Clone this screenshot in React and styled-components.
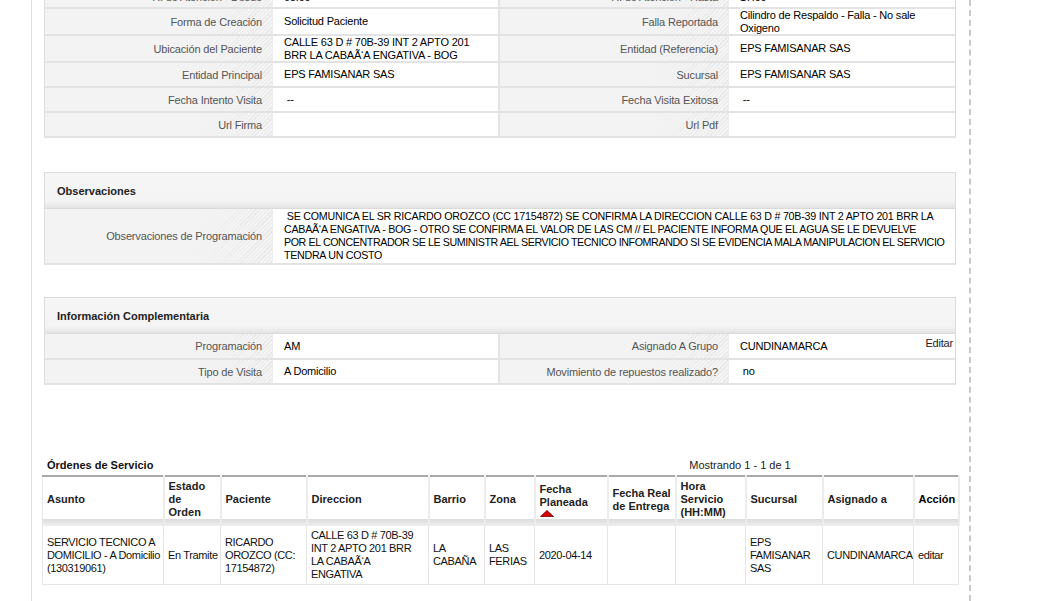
import styled, { createGlobalStyle } from 'styled-components';

const GlobalStyle = createGlobalStyle`
  html, body {
    margin: 0;
    padding: 0;
    background: #fff;
  }
  body {
    font-family: "Liberation Sans", Arial, sans-serif;
    font-size: 11px;
    color: #000;
  }
`

const Page = styled.div`
    height: 601px;
    overflow: hidden;
    padding-left: 31px;
`

const Frame = styled.div`
    width: 940px;
    height: 601px;
    box-sizing: border-box;
    overflow: hidden;
    border-left: 1px solid #dcdcdc;
    border-right: 2px dashed #c9c9c9;
    padding: 0 13px 0 12px;
`

// page is scrolled a bit, first row is cut at the top
const Scrolled = styled.div`
    margin-top: -16px;
`

const FieldGrid = styled.div`
    display: grid;
    grid-template-columns: ${props => props.cols};
    border-left: ${props => props.boxed ? '1px solid #dcdcdc' : 'none'};
    border-right: ${props => props.boxed ? '1px solid #dcdcdc' : 'none'};
`

const Label = styled.div`
    display: flex;
    align-items: ${props => props.low ? 'flex-end' : 'center'};
    justify-content: flex-end;
    text-align: right;
    min-height: ${props => props.h || '23px'};
    padding: 0 10px ${props => props.low ? '4px' : '0'};
    color: #555;
    letter-spacing: -0.15px;
    border-bottom: 2px solid #e3e3e3;
    background:
        linear-gradient(to right, #f3f3f3 62%, rgba(243, 243, 243, 0.2) 100%),
        repeating-linear-gradient(135deg, #f4f4f4 0 2px, #e5e5e5 2px 3px);
`

const Value = styled.div`
    position: relative;
    display: flex;
    align-items: ${props => props.low ? 'flex-end' : 'center'};
    min-width: 0;
    padding: 0 11px ${props => props.low ? '4px' : '0'};
    line-height: 12.5px;
    letter-spacing: -0.2px;
    border-bottom: 2px solid #e3e3e3;
    border-left: 1px solid #ececec;
    border-right: ${props => props.divider ? '2px solid #e3e3e3' : 'none'};
`

const ObsText = styled.div`
    padding: 1px 0;
    line-height: 13px;
    font-size: 10.7px;
    white-space: nowrap;
`

const ObsLine = styled.div`
    letter-spacing: ${props => props.spacing};
`

const EditLink = styled.span`
    position: absolute;
    top: 3px;
    right: 2px;
    font-size: 11px;
    color: #222;
`

const Section = styled.section`
    margin-top: ${props => props.gap};
    border: 1px solid #dcdcdc;
    border-bottom: none;
`

const SectionHeader = styled.div`
    height: 35px;
    display: flex;
    align-items: center;
    padding-left: 12px;
    font-weight: bold;
    color: #222;
    background: linear-gradient(to bottom, #f6f6f6 0%, #f4f4f4 80%, #e4e4e4 100%);
    border-bottom: 1px solid #dadada;
`

const OrdersHead = styled.div`
    margin-top: 72px;
    display: grid;
    grid-template-columns: 456px 456px;
    height: 15px;
    align-items: center;
`

const OrdersTitle = styled.div`
    padding-left: 3px;
    font-weight: bold;
    color: #111;
`

const Counter = styled.div`
    text-align: center;
    padding-left: 24px;
    color: #222;
`

const OrdersTable = styled.table`
    margin: 3px -2px 0;
    width: 916px;
    border-collapse: collapse;
    table-layout: fixed;
    border-top: 2px solid #a9a9a9;
    border-left: 1px solid #e6e6e6;
`

const Th = styled.th`
    text-align: left;
    vertical-align: middle;
    padding: 3px 3px 7px 4px;
    line-height: 13px;
    font-weight: bold;
    white-space: nowrap;
    color: ${props => props.dark ? '#000' : '#222'};
    border-right: 2px solid #ececec;
    background: linear-gradient(to bottom, #fff 0%, #fff 85%, #dcdcdc 86%, #efefef 100%);
`

const Td = styled.td`
    vertical-align: middle;
    padding: 3px 3px 3px 4px;
    line-height: 13px;
    letter-spacing: -0.35px;
    white-space: nowrap;
    color: #111;
    border-right: 1px solid #e6e6e6;
    border-bottom: 1px solid #e6e6e6;
`

const SortUp = () => (
    <svg width="14" height="7" viewBox="0 0 14 7" style={{ display: 'block', marginTop: 1 }}>
        <polygon points="7,0.5 13.5,6.5 0.5,6.5" fill="#d40000" stroke="#7a0000" strokeWidth="0.8" />
    </svg>
)

const topRows = [
    ['Forma de Creación', 'Solicitud Paciente', 'Falla Reportada', <>Cilindro de Respaldo - Falla - No sale<br />Oxigeno</>],
    ['Ubicación del Paciente', <>CALLE 63 D # 70B-39 INT 2 APTO 201<br />BRR LA CABAÃ‘A ENGATIVA - BOG</>, 'Entidad (Referencia)', 'EPS FAMISANAR SAS'],
    ['Entidad Principal', 'EPS FAMISANAR SAS', 'Sucursal', 'EPS FAMISANAR SAS'],
    ['Fecha Intento Visita', '\u00a0--', 'Fecha Visita Exitosa', '\u00a0--'],
    ['Url Firma', '', 'Url Pdf', ''],
]

const obsLines = [
    ['\u00a0SE COMUNICA EL SR RICARDO OROZCO (CC 17154872) SE CONFIRMA LA DIRECCION CALLE 63 D # 70B-39 INT 2 APTO 201 BRR LA', '-0.23px'],
    ['CABAÃ‘A ENGATIVA - BOG - OTRO SE CONFIRMA EL VALOR DE LAS CM // EL PACIENTE INFORMA QUE EL AGUA SE LE DEVUELVE', '-0.28px'],
    ['POR EL CONCENTRADOR SE LE SUMINISTR AEL SERVICIO TECNICO INFOMRANDO SI SE EVIDENCIA MALA MANIPULACION EL SERVICIO', '-0.41px'],
    ['TENDRA UN COSTO', '-0.3px'],
]

const columns = [
    { title: 'Asunto', w: 121 },
    { title: <>Estado<br />de<br />Orden</>, w: 57 },
    { title: 'Paciente', w: 86 },
    { title: 'Direccion', w: 122 },
    { title: 'Barrio', w: 56 },
    { title: 'Zona', w: 50 },
    { title: <>Fecha<br />Planeada<SortUp /></>, w: 73 },
    { title: <>Fecha Real<br />de Entrega</>, w: 68 },
    { title: <>Hora<br />Servicio<br />(HH:MM)</>, w: 70 },
    { title: 'Sucursal', w: 77 },
    { title: 'Asignado a', w: 91 },
    { title: 'Acción', w: 45, dark: true },
]

const orderRow = [
    <>SERVICIO TECNICO A<br />DOMICILIO - A Domicilio<br />(130319061)</>,
    'En Tramite',
    <>RICARDO<br />OROZCO (CC:<br />17154872)</>,
    <>CALLE 63 D # 70B-39<br />INT 2 APTO 201 BRR<br />LA CABAÃ‘A<br />ENGATIVA</>,
    <>LA<br />CABAÑA</>,
    <>LAS<br />FERIAS</>,
    '2020-04-14',
    '',
    '',
    <>EPS<br />FAMISANAR<br />SAS</>,
    'CUNDINAMARCA',
    'editar',
]

const App = () => {
    return (
        <Page>
            <GlobalStyle />
            <Frame>
                <Scrolled>
                    <FieldGrid boxed cols="227px 228px 228px 227px">
                        {/* first row, mostly scrolled out of view */}
                        <Label low h="19px">H. de Atención - Desde</Label>
                        <Value low divider>08:00</Value>
                        <Label low h="19px">H. de Atención - Hasta</Label>
                        <Value low>17:00</Value>
                        {topRows.map((r, i) => (
                            <>
                                <Label key={'a' + i}>{r[0]}</Label>
                                <Value key={'b' + i} divider>{r[1]}</Value>
                                <Label key={'c' + i}>{r[2]}</Label>
                                <Value key={'d' + i}>{r[3]}</Value>
                            </>
                        ))}
                    </FieldGrid>

                    <Section gap="34px">
                        <SectionHeader>Observaciones</SectionHeader>
                        <FieldGrid cols="227px minmax(0, 1fr)">
                            <Label h="54px">Observaciones de Programación</Label>
                            <Value>
                                <ObsText>
                                    {obsLines.map(([text, sp], i) => (
                                        <ObsLine key={i} spacing={sp}>{text}</ObsLine>
                                    ))}
                                </ObsText>
                            </Value>
                        </FieldGrid>
                    </Section>

                    <Section gap="32px">
                        <SectionHeader>Información Complementaria</SectionHeader>
                        <FieldGrid cols="227px 228px 228px 227px">
                            <Label h="24px">Programación</Label>
                            <Value divider>AM</Value>
                            <Label h="24px">Asignado A Grupo</Label>
                            <Value>CUNDINAMARCA<EditLink>Editar</EditLink></Value>
                            <Label>Tipo de Visita</Label>
                            <Value divider>A Domicilio</Value>
                            <Label>Movimiento de repuestos realizado?</Label>
                            <Value>&nbsp;no</Value>
                        </FieldGrid>
                    </Section>

                    <OrdersHead>
                        <OrdersTitle>Órdenes de Servicio</OrdersTitle>
                        <Counter>Mostrando 1 - 1 de 1</Counter>
                    </OrdersHead>
                    <OrdersTable>
                        <colgroup>
                            {columns.map((c, i) => <col key={i} style={{ width: c.w }} />)}
                        </colgroup>
                        <thead>
                            <tr>
                                {columns.map((c, i) => <Th key={i} dark={c.dark}>{c.title}</Th>)}
                            </tr>
                        </thead>
                        <tbody>
                            <tr>
                                {orderRow.map((v, i) => <Td key={i}>{v}</Td>)}
                            </tr>
                        </tbody>
                    </OrdersTable>
                </Scrolled>
            </Frame>
        </Page>
    )
}

export default App;
